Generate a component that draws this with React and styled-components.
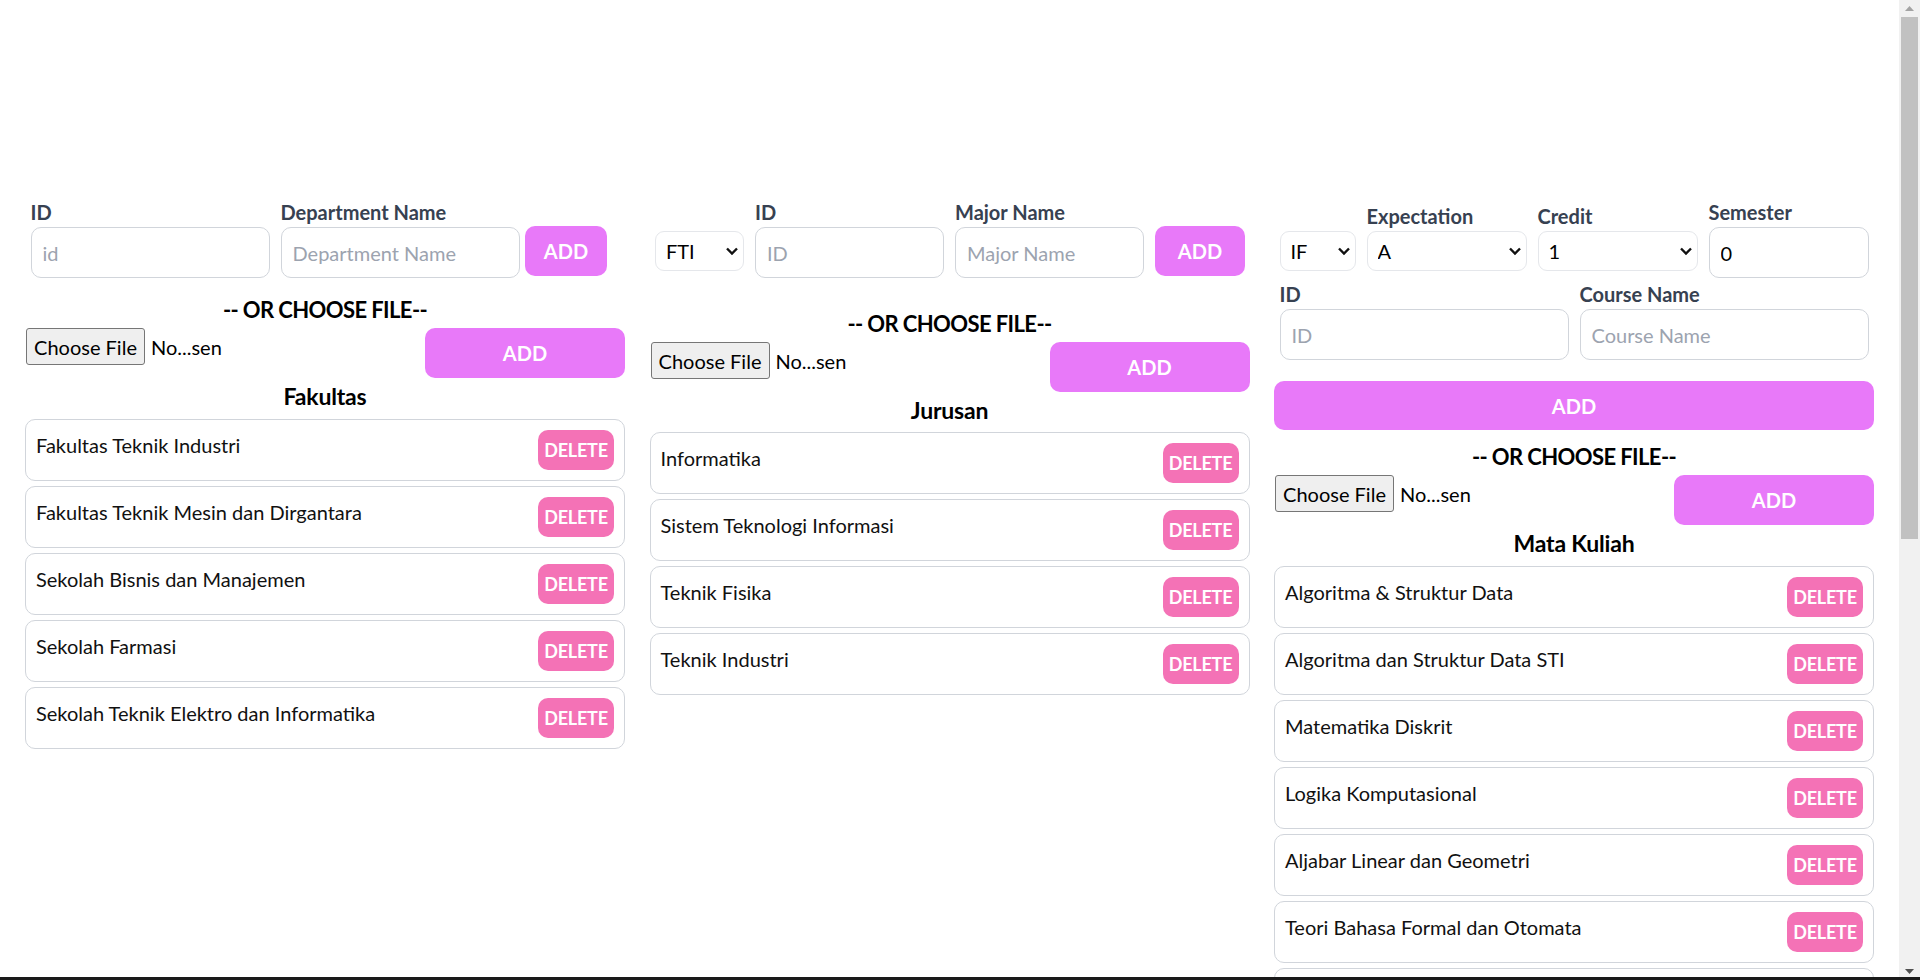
import React from "react";
import styled, { createGlobalStyle } from "styled-components";

const GlobalStyle = createGlobalStyle`
  html, body {
    margin: 0;
    padding: 0;
    background: #ffffff;
  }
  body {
    font-family: Lato, "Segoe UI", "Noto Sans", sans-serif;
    color: #000;
  }
  *, *::before, *::after { box-sizing: border-box; }
`;

const Page = styled.main`
  display: flex;
  align-items: flex-start;
  gap: 24.5px;
  padding: 197px 0 70px 25px;
`;

const Column = styled.section`
  flex: none;
  width: 600px;
  display: flex;
  flex-direction: column;
`;

const FormRow = styled.div`
  display: flex;
  align-items: flex-end;
  margin-top: ${(p) => p.$mt || 0}px;
`;

const Field = styled.div`
  display: flex;
  flex-direction: column;
  margin: 0 5.5px ${(p) => p.$mb || 0}px;
  flex: ${(p) => (p.$grow ? "1 1 0" : "none")};
`;

const Label = styled.label`
  font-size: 20px;
  line-height: 30px;
  font-weight: 700;
  color: #374151;
`;

const TextInput = styled.input`
  width: ${(p) => (p.$w ? `${p.$w}px` : "100%")};
  height: 51px;
  padding: 0 11px;
  border: 1px solid #d1d5db;
  border-radius: 10px;
  background: #fff;
  font-family: inherit;
  font-size: 20px;
  color: #000;
  outline: none;
  &::placeholder { color: #9ca3af; }
`;

const SelectWrap = styled.div`
  position: relative;
  flex: none;
  width: ${(p) => p.$w}px;
  margin: ${(p) => (p.$bare ? "0" : "0 5.5px 7px")};
`;

const Select = styled.select`
  appearance: none;
  -webkit-appearance: none;
  width: 100%;
  height: 40px;
  padding: 0 26px 0 10px;
  border: 1px solid #e5e7eb;
  border-radius: 9px;
  background: #fff;
  font-family: inherit;
  font-size: 20px;
  color: #000;
  outline: none;
`;

const Chevron = styled.svg`
  position: absolute;
  right: 5px;
  top: 50%;
  transform: translateY(-50%);
  pointer-events: none;
`;

const AddButton = styled.button`
  flex: none;
  width: ${(p) => p.$w};
  height: ${(p) => p.$h || 50}px;
  margin: ${(p) => p.$mt || 0}px 0 ${(p) => p.$mb || 0}px ${(p) => p.$ml || 0}px;
  padding: 0;
  border: 0;
  border-radius: 10px;
  background: #e879f9;
  color: #fff;
  font-family: inherit;
  font-size: 20px;
  font-weight: 700;
  cursor: pointer;
`;

const Title = styled.h2`
  margin: ${(p) => p.$mt || 0}px 0 0;
  font-size: ${(p) => (p.$divider ? 22 : 23)}px;
  line-height: 36px;
  font-weight: 700;
  letter-spacing: ${(p) => (p.$divider ? -0.6 : -0.2)}px;
  text-align: center;
  color: #000;
`;

const FileRow = styled.div`
  display: flex;
  justify-content: space-between;
  align-items: flex-start;
`;

const FilePicker = styled.label`
  display: flex;
  align-items: center;
  gap: 6px;
  font-size: 20px;
  cursor: pointer;
  padding-left: 1px;
`;

const HiddenFile = styled.input`
  display: none;
`;

const FileButton = styled.span`
  display: inline-flex;
  align-items: center;
  justify-content: center;
  width: 119px;
  height: 37px;
  background: #efefef;
  border: 1px solid #767676;
  border-radius: 3px;
  font-size: 20px;
  color: #000;
`;

const FileName = styled.span`
  font-size: 20px;
  color: #000;
`;

const List = styled.ul`
  list-style: none;
  margin: ${(p) => p.$mt || 0}px 0 0;
  padding: 0;
  display: flex;
  flex-direction: column;
  gap: 5px;
`;

const Item = styled.li`
  display: flex;
  justify-content: space-between;
  align-items: flex-start;
  padding: 10px;
  border: 1px solid #d1d5db;
  border-radius: 10px;
`;

const ItemText = styled.span`
  font-size: 20px;
  line-height: 30px;
  color: #111;
`;

const DeleteButton = styled.button`
  flex: none;
  width: 76px;
  height: 40px;
  padding: 0;
  border: 0;
  border-radius: 10px;
  background: #f472b6;
  color: #fff;
  font-family: inherit;
  font-size: 18px;
  font-weight: 700;
  letter-spacing: -0.2px;
  cursor: pointer;
`;

/* window chrome: the browser's classic scrollbar and the frame's bottom edge */
const ScrollTrack = styled.div`
  position: fixed;
  top: 0;
  right: 0;
  bottom: 0;
  width: 21px;
  background: #f1f1f1;
  display: flex;
  flex-direction: column;
  align-items: center;
  pointer-events: none;
`;

const ScrollArrow = styled.div`
  flex: none;
  height: 17px;
  width: 100%;
  display: flex;
  align-items: center;
  justify-content: center;
`;

const ScrollThumb = styled.div`
  flex: none;
  width: 17px;
  height: 522px;
  background: #c1c1c1;
`;

const Spacer = styled.div`
  flex: 1;
`;

const FrameEdge = styled.div`
  position: fixed;
  left: 0;
  right: 0;
  bottom: 0;
  height: 3px;
  background: #1a1a1a;
  pointer-events: none;
`;

function DropDown({ width, options, bare }) {
  return (
    <SelectWrap $w={width} $bare={bare}>
      <Select defaultValue={options[0]}>
        {options.map((o) => (
          <option key={o}>{o}</option>
        ))}
      </Select>
      <Chevron width="14" height="9" viewBox="0 0 14 9">
        <path d="M2 2 L7 7 L12 2" fill="none" stroke="#111" strokeWidth="2.4" />
      </Chevron>
    </SelectWrap>
  );
}

function FileUpload() {
  return (
    <FileRow>
      <FilePicker>
        <HiddenFile type="file" />
        <FileButton>Choose File</FileButton>
        <FileName>No...sen</FileName>
      </FilePicker>
      <AddButton $w="200px">ADD</AddButton>
    </FileRow>
  );
}

function ItemList({ items, mt }) {
  return (
    <List $mt={mt}>
      {items.map((name) => (
        <Item key={name}>
          <ItemText>{name}</ItemText>
          <DeleteButton>DELETE</DeleteButton>
        </Item>
      ))}
    </List>
  );
}

const faculties = [
  "Fakultas Teknik Industri",
  "Fakultas Teknik Mesin dan Dirgantara",
  "Sekolah Bisnis dan Manajemen",
  "Sekolah Farmasi",
  "Sekolah Teknik Elektro dan Informatika",
];

const majors = [
  "Informatika",
  "Sistem Teknologi Informasi",
  "Teknik Fisika",
  "Teknik Industri",
];

const courses = [
  "Algoritma & Struktur Data",
  "Algoritma dan Struktur Data STI",
  "Matematika Diskrit",
  "Logika Komputasional",
  "Aljabar Linear dan Geometri",
  "Teori Bahasa Formal dan Otomata",
  "Strategi Algoritma",
  "Basis Data",
  "Sistem Operasi",
  "Jaringan Komputer",
  "Rekayasa Perangkat Lunak",
  "Pemrograman Berorientasi Objek",
  "Inteligensi Artifisial",
  "Sistem Paralel dan Terdistribusi",
  "Pengembangan Aplikasi Web",
  "Probabilitas dan Statistika",
  "Manajemen Proyek Perangkat Lunak",
];

export default function App() {
  return (
    <>
      <GlobalStyle />
      <Page>
        <Column>
          <FormRow>
            <Field>
              <Label htmlFor="dep-id">ID</Label>
              <TextInput id="dep-id" $w={239} placeholder="id" />
            </Field>
            <Field>
              <Label htmlFor="dep-name">Department Name</Label>
              <TextInput id="dep-name" $w={239} placeholder="Department Name" />
            </Field>
            <AddButton $w="82px" $mb={2}>ADD</AddButton>
          </FormRow>
          <Title $divider $mt={14}>-- OR CHOOSE FILE--</Title>
          <FileUpload />
          <Title>Fakultas</Title>
          <ItemList items={faculties} mt={5} />
        </Column>

        <Column>
          <FormRow>
            <DropDown width={89} options={["FTI", "FMTD", "SBM", "SF", "STEI"]} />
            <Field>
              <Label htmlFor="maj-id">ID</Label>
              <TextInput id="maj-id" $w={189} placeholder="ID" />
            </Field>
            <Field>
              <Label htmlFor="maj-name">Major Name</Label>
              <TextInput id="maj-name" $w={189} placeholder="Major Name" />
            </Field>
            <AddButton $w="90px" $ml={5.5} $mb={2}>ADD</AddButton>
          </FormRow>
          <Title $divider $mt={28}>-- OR CHOOSE FILE--</Title>
          <FileUpload />
          <Title>Jurusan</Title>
          <ItemList items={majors} mt={4} />
        </Column>

        <Column>
          <FormRow>
            <DropDown width={76} options={["IF", "STI", "TF", "TI"]} />
            <Field $mb={7}>
              <Label>Expectation</Label>
              <DropDown bare width={160} options={["A", "AB", "B", "BC", "C"]} />
            </Field>
            <Field $mb={7}>
              <Label>Credit</Label>
              <DropDown bare width={160} options={["1", "2", "3", "4"]} />
            </Field>
            <Field>
              <Label htmlFor="semester">Semester</Label>
              <TextInput id="semester" $w={160} defaultValue="0" />
            </Field>
          </FormRow>
          <FormRow $mt={1}>
            <Field $grow>
              <Label htmlFor="course-id">ID</Label>
              <TextInput id="course-id" placeholder="ID" />
            </Field>
            <Field $grow>
              <Label htmlFor="course-name">Course Name</Label>
              <TextInput id="course-name" placeholder="Course Name" />
            </Field>
          </FormRow>
          <AddButton $w="100%" $h={49} $mt={21}>ADD</AddButton>
          <Title $divider $mt={9}>-- OR CHOOSE FILE--</Title>
          <FileUpload />
          <Title>Mata Kuliah</Title>
          <ItemList items={courses} mt={5} />
        </Column>
      </Page>

      <ScrollTrack aria-hidden="true">
        <ScrollArrow>
          <svg width="9" height="5" viewBox="0 0 9 5">
            <path d="M0 5 L4.5 0 L9 5 Z" fill="#a3a3a3" />
          </svg>
        </ScrollArrow>
        <ScrollThumb />
        <Spacer />
        <ScrollArrow>
          <svg width="9" height="5" viewBox="0 0 9 5">
            <path d="M0 0 L4.5 5 L9 0 Z" fill="#505050" />
          </svg>
        </ScrollArrow>
      </ScrollTrack>
      <FrameEdge aria-hidden="true" />
    </>
  );
}
